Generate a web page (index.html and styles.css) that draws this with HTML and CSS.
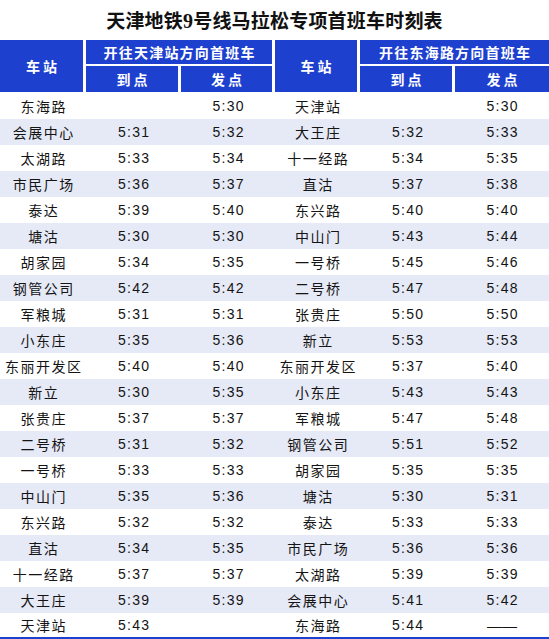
FILE: index.html
```html
<!DOCTYPE html>
<html lang="zh-CN">
<head>
<meta charset="utf-8">
<title>天津地铁9号线马拉松专项首班车时刻表</title>
<link rel="stylesheet" href="styles.css">
</head>
<body>
<h1 class="title">天津地铁<span class="num">9</span>号线马拉松专项首班车时刻表</h1>
<table class="timetable">
  <colgroup>
    <col class="c-st1"><col class="c-a1"><col class="c-d1">
    <col class="c-st2"><col class="c-a2"><col class="c-d2">
  </colgroup>
  <thead>
    <tr class="h1">
      <th rowspan="2" class="sp">车站</th>
      <th colspan="2" class="dir">开往天津站方向首班车</th>
      <th rowspan="2" class="sp">车站</th>
      <th colspan="2" class="dir last">开往东海路方向首班车</th>
    </tr>
    <tr class="h2">
      <th class="sp">到点</th>
      <th class="sp">发点</th>
      <th class="sp">到点</th>
      <th class="sp last">发点</th>
    </tr>
  </thead>
  <tbody>
    <tr><td class="st">东海路</td><td class="t"></td><td class="t">5:30</td><td class="st">天津站</td><td class="t"></td><td class="t">5:30</td></tr>
    <tr><td class="st">会展中心</td><td class="t">5:31</td><td class="t">5:32</td><td class="st">大王庄</td><td class="t">5:32</td><td class="t">5:33</td></tr>
    <tr><td class="st">太湖路</td><td class="t">5:33</td><td class="t">5:34</td><td class="st">十一经路</td><td class="t">5:34</td><td class="t">5:35</td></tr>
    <tr><td class="st">市民广场</td><td class="t">5:36</td><td class="t">5:37</td><td class="st">直沽</td><td class="t">5:37</td><td class="t">5:38</td></tr>
    <tr><td class="st">泰达</td><td class="t">5:39</td><td class="t">5:40</td><td class="st">东兴路</td><td class="t">5:40</td><td class="t">5:40</td></tr>
    <tr><td class="st">塘沽</td><td class="t">5:30</td><td class="t">5:30</td><td class="st">中山门</td><td class="t">5:43</td><td class="t">5:44</td></tr>
    <tr><td class="st">胡家园</td><td class="t">5:34</td><td class="t">5:35</td><td class="st">一号桥</td><td class="t">5:45</td><td class="t">5:46</td></tr>
    <tr><td class="st">钢管公司</td><td class="t">5:42</td><td class="t">5:42</td><td class="st">二号桥</td><td class="t">5:47</td><td class="t">5:48</td></tr>
    <tr><td class="st">军粮城</td><td class="t">5:31</td><td class="t">5:31</td><td class="st">张贵庄</td><td class="t">5:50</td><td class="t">5:50</td></tr>
    <tr><td class="st">小东庄</td><td class="t">5:35</td><td class="t">5:36</td><td class="st">新立</td><td class="t">5:53</td><td class="t">5:53</td></tr>
    <tr><td class="st">东丽开发区</td><td class="t">5:40</td><td class="t">5:40</td><td class="st">东丽开发区</td><td class="t">5:37</td><td class="t">5:40</td></tr>
    <tr><td class="st">新立</td><td class="t">5:30</td><td class="t">5:35</td><td class="st">小东庄</td><td class="t">5:43</td><td class="t">5:43</td></tr>
    <tr><td class="st">张贵庄</td><td class="t">5:37</td><td class="t">5:37</td><td class="st">军粮城</td><td class="t">5:47</td><td class="t">5:48</td></tr>
    <tr><td class="st">二号桥</td><td class="t">5:31</td><td class="t">5:32</td><td class="st">钢管公司</td><td class="t">5:51</td><td class="t">5:52</td></tr>
    <tr><td class="st">一号桥</td><td class="t">5:33</td><td class="t">5:33</td><td class="st">胡家园</td><td class="t">5:35</td><td class="t">5:35</td></tr>
    <tr><td class="st">中山门</td><td class="t">5:35</td><td class="t">5:36</td><td class="st">塘沽</td><td class="t">5:30</td><td class="t">5:31</td></tr>
    <tr><td class="st">东兴路</td><td class="t">5:32</td><td class="t">5:32</td><td class="st">泰达</td><td class="t">5:33</td><td class="t">5:33</td></tr>
    <tr><td class="st">直沽</td><td class="t">5:34</td><td class="t">5:35</td><td class="st">市民广场</td><td class="t">5:36</td><td class="t">5:36</td></tr>
    <tr><td class="st">十一经路</td><td class="t">5:37</td><td class="t">5:37</td><td class="st">太湖路</td><td class="t">5:39</td><td class="t">5:39</td></tr>
    <tr><td class="st">大王庄</td><td class="t">5:39</td><td class="t">5:39</td><td class="st">会展中心</td><td class="t">5:41</td><td class="t">5:42</td></tr>
    <tr class="lastrow"><td class="st">天津站</td><td class="t">5:43</td><td class="t"></td><td class="st">东海路</td><td class="t">5:44</td><td class="t dash">——</td></tr>
  </tbody>
</table>
<div class="endbar"></div>
</body>
</html>
```

FILE: styles.css
```css
html, body {
  margin: 0;
  padding: 0;
  background: #ffffff;
}
body {
  width: 549px;
  height: 639px;
  overflow: hidden;
  font-family: "Noto Sans CJK SC", "Liberation Sans", sans-serif;
  color: #141414;
}
.title {
  margin: 0;
  height: 40px;
  line-height: 40px;
  text-align: center;
  font-size: 19px;
  font-weight: 700;
  color: #111111;
  letter-spacing: 0.2px;
}
.title .num {
  font-family: "Liberation Serif", serif;
  font-size: 20px;
}
.timetable {
  width: 549px;
  table-layout: fixed;
  border-collapse: separate;
  border-spacing: 0;
}
.c-st1 { width: 86px; }
.c-a1 { width: 95px; }
.c-d1 { width: 94px; }
.c-st2 { width: 85px; }
.c-a2 { width: 95px; }
.c-d2 { width: 94px; }

.timetable th {
  background: #1e40cf;
  color: #ffffff;
  font-weight: 700;
  font-size: 14px;
  padding: 0;
  text-align: center;
  border-right: 3px solid #ffffff;
}
.timetable th.last {
  border-right: 0;
}
.timetable .h1 th.dir {
  height: 24px;
  border-bottom: 2px solid #ffffff;
  letter-spacing: 1.2px;
  padding-left: 1.2px;
}
.timetable .h2 th {
  height: 26px;
}
.timetable th.sp {
  letter-spacing: 3px;
  padding-left: 3px;
}
.timetable td {
  padding: 0;
  height: 26px;
  text-align: center;
  white-space: nowrap;
}
.timetable tbody tr:first-child td {
  height: 27px;
}
.timetable tbody tr:nth-child(even) td {
  background: #e6e9f6;
}
.timetable tbody tr.lastrow td {
  height: 24px;
}
.timetable td.st {
  font-size: 14px;
  letter-spacing: 1.5px;
  padding-left: 1.5px;
}
.timetable td.t {
  font-family: "Liberation Sans", Arial, sans-serif;
  font-size: 14px;
  letter-spacing: 1.3px;
  padding-left: 1.3px;
}
.timetable td.dash {
  font-family: "Liberation Sans", Arial, sans-serif;
  letter-spacing: 0;
  padding-left: 0;
  font-size: 15px;
}
.endbar {
  height: 3px;
  background: #1e40cf;
}
```
